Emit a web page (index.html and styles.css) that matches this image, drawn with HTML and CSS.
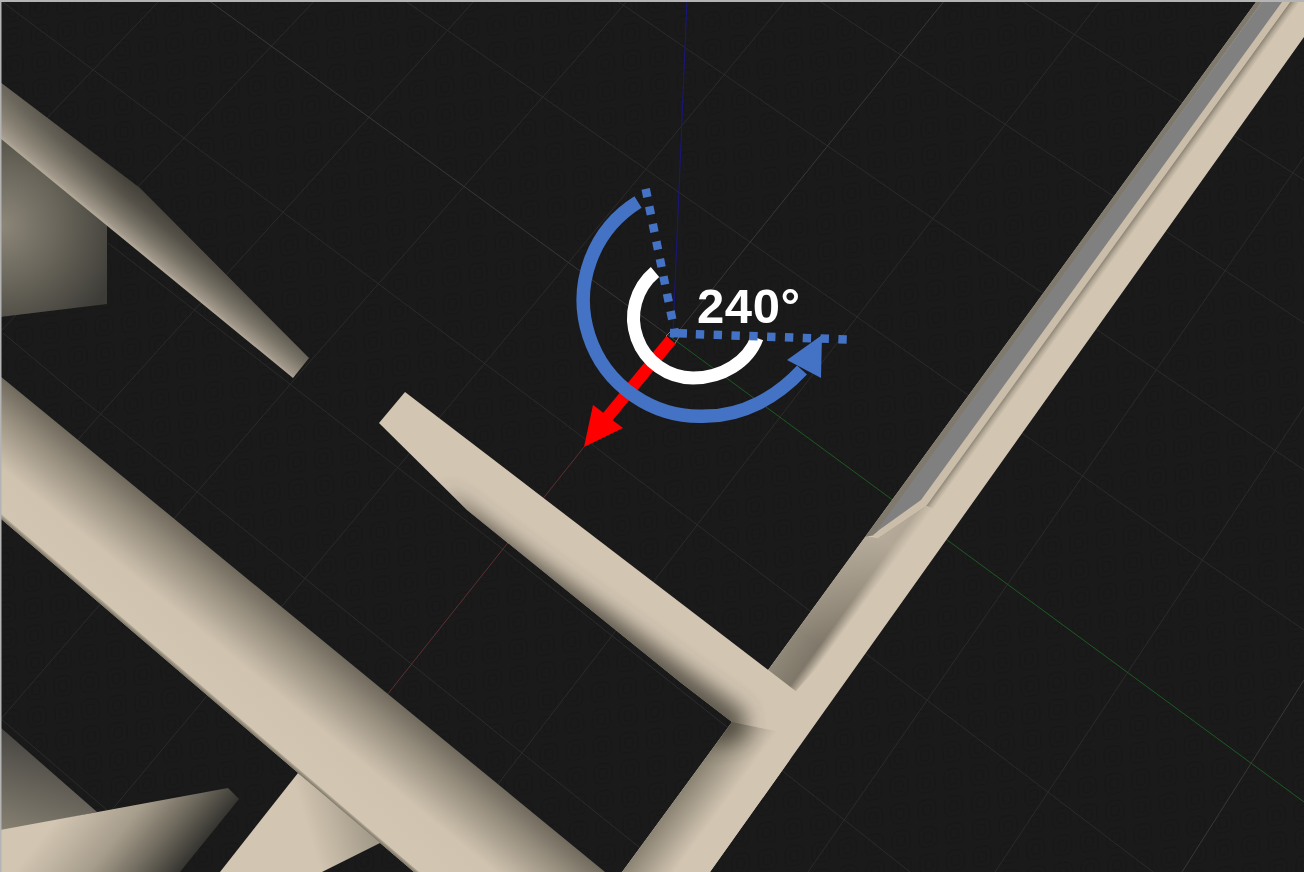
FILE: index.html
```html
<!DOCTYPE html>
<html lang="en">
<head>
<meta charset="utf-8">
<title>Rotate 240°</title>
<link rel="stylesheet" href="styles.css">
</head>
<body>
<main class="stage">
<svg class="scene" viewBox="0 0 1304 872" width="1304" height="872" xmlns="http://www.w3.org/2000/svg">
  <defs>
    <pattern id="tex" width="27" height="27" patternUnits="userSpaceOnUse" patternTransform="rotate(-8) skewX(-6)">
      <rect class="doodle" x="3" y="3" width="18" height="20" rx="6"/>
      <rect class="doodle" x="8" y="8" width="8" height="10" rx="3"/>
    </pattern>
    <linearGradient id="gLong" gradientUnits="userSpaceOnUse" x1="0" y1="518" x2="72" y2="430">
      <stop offset="0" stop-color="#d2c5b2"/><stop offset=".35" stop-color="#d0c3b0"/><stop offset=".7" stop-color="#9b9282"/><stop offset="1" stop-color="#6a6458"/>
    </linearGradient>
    <linearGradient id="gLongEdge" gradientUnits="userSpaceOnUse" x1="0" y1="518" x2="3.250" y2="514.200">
      <stop offset="0" stop-color="#7a7363"/><stop offset="1" stop-color="#d2c5b2"/>
    </linearGradient>
    <linearGradient id="gBlade" gradientUnits="userSpaceOnUse" x1="0" y1="138" x2="38" y2="92">
      <stop offset="0" stop-color="#b9af9d"/><stop offset=".08" stop-color="#a0978a"/><stop offset=".3" stop-color="#7a7568"/><stop offset=".6" stop-color="#555149"/><stop offset="1" stop-color="#38362f"/>
    </linearGradient>
    <linearGradient id="gBladeLight" gradientUnits="userSpaceOnUse" x1="0" y1="0" x2="125" y2="0">
      <stop offset="0" stop-color="#a39b8b" stop-opacity=".35"/><stop offset="1" stop-color="#a39b8b" stop-opacity="0"/>
    </linearGradient>
    <radialGradient id="gUnder" gradientUnits="userSpaceOnUse" cx="0" cy="225" r="125">
      <stop offset="0" stop-color="#8d8779"/><stop offset=".45" stop-color="#6b675c"/><stop offset="1" stop-color="#3d3c37"/>
    </radialGradient>
    <linearGradient id="gWedge" gradientUnits="userSpaceOnUse" x1="110" y1="754" x2="210" y2="835">
      <stop offset="0" stop-color="#d2c5b2"/><stop offset=".45" stop-color="#a79d8c"/><stop offset=".75" stop-color="#6c675b"/><stop offset="1" stop-color="#353430"/>
    </linearGradient>
    <linearGradient id="gTri" gradientUnits="userSpaceOnUse" x1="40" y1="735" x2="10" y2="830">
      <stop offset="0" stop-color="#454340"/><stop offset="1" stop-color="#857f71"/>
    </linearGradient>
    <linearGradient id="gFoot" gradientUnits="userSpaceOnUse" x1="312" y1="842" x2="378" y2="822">
      <stop offset="0" stop-color="#d2c5b2"/><stop offset="1" stop-color="#9c9382"/>
    </linearGradient>
    <linearGradient id="gStrip" gradientUnits="userSpaceOnUse" x1="1290" y1="2" x2="1296.500" y2="6.700">
      <stop offset="0" stop-color="#8a8172"/><stop offset=".5" stop-color="#b5aa98"/><stop offset="1" stop-color="#d2c5b2"/>
    </linearGradient>
    <linearGradient id="gUpper" gradientUnits="userSpaceOnUse" x1="840" y1="572" x2="870.700" y2="594.300">
      <stop offset="0" stop-color="#8f8778"/><stop offset=".7" stop-color="#7f7769"/><stop offset="1" stop-color="#d2c5b2"/>
    </linearGradient>
    <linearGradient id="gUpperFade" gradientUnits="userSpaceOnUse" x1="872" y1="532" x2="800" y2="632">
      <stop offset="0" stop-color="#d2c5b2" stop-opacity=".62"/><stop offset="1" stop-color="#d2c5b2" stop-opacity="0"/>
    </linearGradient>
    <linearGradient id="gLower" gradientUnits="userSpaceOnUse" x1="732" y1="722" x2="766" y2="747">
      <stop offset="0" stop-color="#8a8272"/><stop offset="1" stop-color="#d2c5b2"/>
    </linearGradient>
    <clipPath id="clipBeam"><polygon points="1256,2 1304,2 1304,37 710,872 622,872 732,722 768,670 865,537"/></clipPath>
    <clipPath id="clipCross"><polygon points="405,392 797,692 790,770 697,770 732,722 680,682 467,510 379,423"/></clipPath>
    <clipPath id="clipBlade"><polygon points="0,82 140,188 309,358 293,378 0,138"/></clipPath>
    <filter id="soft" x="-20%" y="-20%" width="140%" height="140%"><feGaussianBlur stdDeviation="10"/></filter>
  </defs>

  <rect class="bg" width="1304" height="872"/>
  <rect class="tex" width="1304" height="872" fill="url(#tex)"/>

  <!-- floor grid -->
  <g class="grid">
    <line x1="0" y1="0" x2="560" y2="420"/><line x1="560" y1="420" x2="865" y2="653"/><line x1="865" y1="653" x2="1153" y2="872"/>
    <line x1="108" y1="243" x2="500" y2="547"/><line x1="500" y1="547" x2="910" y2="872"/>
    <line x1="3" y1="333" x2="83" y2="400"/><line x1="83" y1="400" x2="670" y2="872"/>
    <line x1="0" y1="718" x2="107" y2="810"/>
    <line x1="404" y1="0" x2="900" y2="347"/><line x1="900" y1="347" x2="1173" y2="540"/><line x1="1173" y1="540" x2="1304" y2="630"/>
    <line x1="616" y1="0" x2="932" y2="218"/><line x1="932" y1="218" x2="1304" y2="470"/>
    <line x1="818" y1="0" x2="1304" y2="323"/>
    <line x1="1020" y1="0" x2="1304" y2="180"/>
    <line x1="475" y1="0" x2="113" y2="400"/><line x1="113" y1="400" x2="60" y2="460"/>
    <line x1="628" y1="0" x2="300" y2="373"/><line x1="300" y1="373" x2="0" y2="720"/>
    <line x1="786" y1="0" x2="540" y2="297"/><line x1="540" y1="297" x2="60" y2="872"/>
    <line x1="320" y1="-5" x2="0" y2="332"/>
    <line x1="160" y1="0" x2="0" y2="167"/>
    <line x1="1101" y1="0" x2="747" y2="460"/><line x1="747" y1="460" x2="455" y2="840"/>
    <line x1="1304" y1="157" x2="808" y2="872"/>
    <line x1="1304" y1="407" x2="995" y2="872"/>
  </g>
  <g class="grid-bright">
    <line x1="208" y1="0" x2="672" y2="338"/>
    <line x1="945" y1="0" x2="673" y2="338"/>
    <line x1="1304" y1="680" x2="1182" y2="872"/>
  </g>
  <line class="axis-blue" x1="687" y1="0" x2="673" y2="332"/>
  <line class="axis-green" x1="672" y1="338" x2="1304" y2="802"/>
  <line class="axis-red" x1="584" y1="447" x2="387" y2="695"/>

  <!-- left geometry -->
  <polygon points="0,136 107,224 107,304 0,317" fill="url(#gUnder)"/>
  <polygon points="0,82 140,188 309,358 293,378 0,138" fill="url(#gBlade)"/>
  <rect x="0" y="70" width="125" height="170" fill="url(#gBladeLight)" clip-path="url(#clipBlade)"/>
  <polygon points="0,727 97,812 0,832" fill="url(#gTri)"/>
  <polygon points="0,830 228,788 239,799 180,872 0,872" fill="url(#gWedge)"/>
  <polygon points="298,773 382,842 322,872 220,872" fill="url(#gFoot)"/>
  <polygon points="0,376 605,872 414,872 0,518" fill="url(#gLong)"/>
  <polygon points="0,518 414,872 419,872 0,513" fill="url(#gLongEdge)"/>

  <!-- right beam -->
  <polygon class="cream" points="1256,2 1304,2 1304,37 710,872 622,872 732,722 768,670 865,537"/>
  <g clip-path="url(#clipBeam)">
    <polygon points="732,722 800,722 760,872 622,872" fill="url(#gLower)"/>
    <polygon points="865,537 878,538 927,505 936,510 833,650 795,692 768,670" fill="url(#gUpper)"/>
    <polygon points="865,537 878,538 927,505 936,510 833,650 795,692 768,670" fill="url(#gUpperFade)"/>
    <polygon points="1290,2 1302,2 936,510 925,505" fill="url(#gStrip)"/>
  </g>
  <polygon class="tan" points="1256,2 1262,2 875,535 865,537"/>
  <polygon class="lip" points="1282,2 1290,2 927,505 878,538 873,535 921,500"/>
  <polygon class="steel" points="1262,2 1282,2 921,500 875,533"/>

  <!-- centre beam -->
  <polygon class="cream" points="405,392 797,692 780,732 732,722 680,682 467,510 379,423"/>
  <g clip-path="url(#clipCross)">
    <polygon class="shade" filter="url(#soft)" points="445,490 470,535 715,745 745,738 745,712 690,672 620,620 540,562"/>
  </g>

  <!-- rotation gizmo annotation -->
  <path class="origin" d="M666 336l6-6 7 7-5 8z"/>
  <polygon class="red" points="666.300,336.200 603.300,412.700 593,405 584,447 623,428 612.700,420.300 675.700,343.800"/>
  <path class="arc-white" d="M655 272A60 60 0 0 0 693 378C722 378 748 362 757 338"/>
  <path class="arc-blue" d="M638 202A117 116 0 0 0 707 416C742 416 776 398 802 370"/>
  <polygon class="blue-fill" points="822,335 787,360 821,378"/>
  <line class="dot-solid" x1="670" y1="333" x2="687" y2="333.600"/>
  <line class="dot" x1="695.800" y1="334.200" x2="847" y2="339.500"/>
  <line class="dot" x1="675.800" y1="336.900" x2="645.200" y2="186.600"/>

  <rect class="frame" width="1304" height="2"/>
  <rect class="frame" width="1.500" height="872"/>
</svg>
<div class="angle">240°</div>
</main>
</body>
</html>
```
FILE: styles.css
```css
html, body {
  margin: 0;
  padding: 0;
  background: #1a1a1a;
  overflow: hidden;
}
.stage {
  position: relative;
  width: 1304px;
  height: 872px;
  overflow: hidden;
}
.scene { display: block; }
.bg { fill: #1a1a1a; }
.doodle { fill: none; stroke: #161616; stroke-width: 1; }
.grid line { stroke: #2b2b2b; stroke-width: 1; }
.grid-bright line { stroke: #383838; stroke-width: 1; }
.axis-blue { stroke: #1a1780; stroke-width: 1; }
.axis-green { stroke: #1d5a24; stroke-width: 1; }
.axis-red { stroke: #5c2f33; stroke-width: 1; }
.cream { fill: #d2c5b2; }
.tan { fill: #7f7a6d; }
.lip { fill: #cabdaa; }
.steel { fill: #808080; }
.shade { fill: #4a443a; opacity: .85; }
.origin { fill: none; stroke: #7a7a7a; stroke-width: 1; }
.red { fill: #ff0000; }
.arc-white { fill: none; stroke: #ffffff; stroke-width: 13; }
.arc-blue { fill: none; stroke: #4472c4; stroke-width: 13.500; }
.blue-fill { fill: #4472c4; }
.dot-solid { stroke: #4472c4; stroke-width: 8.500; }
.dot { stroke: #4472c4; stroke-width: 8.500; stroke-dasharray: 8.400 9.430; }
.frame { fill: #b4b4b4; }
.angle {
  position: absolute;
  left: 697px;
  top: 282px;
  font: bold 49px/49px "Liberation Sans", Arial, sans-serif;
  letter-spacing: .6px;
  color: #ffffff;
  white-space: nowrap;
}
```
